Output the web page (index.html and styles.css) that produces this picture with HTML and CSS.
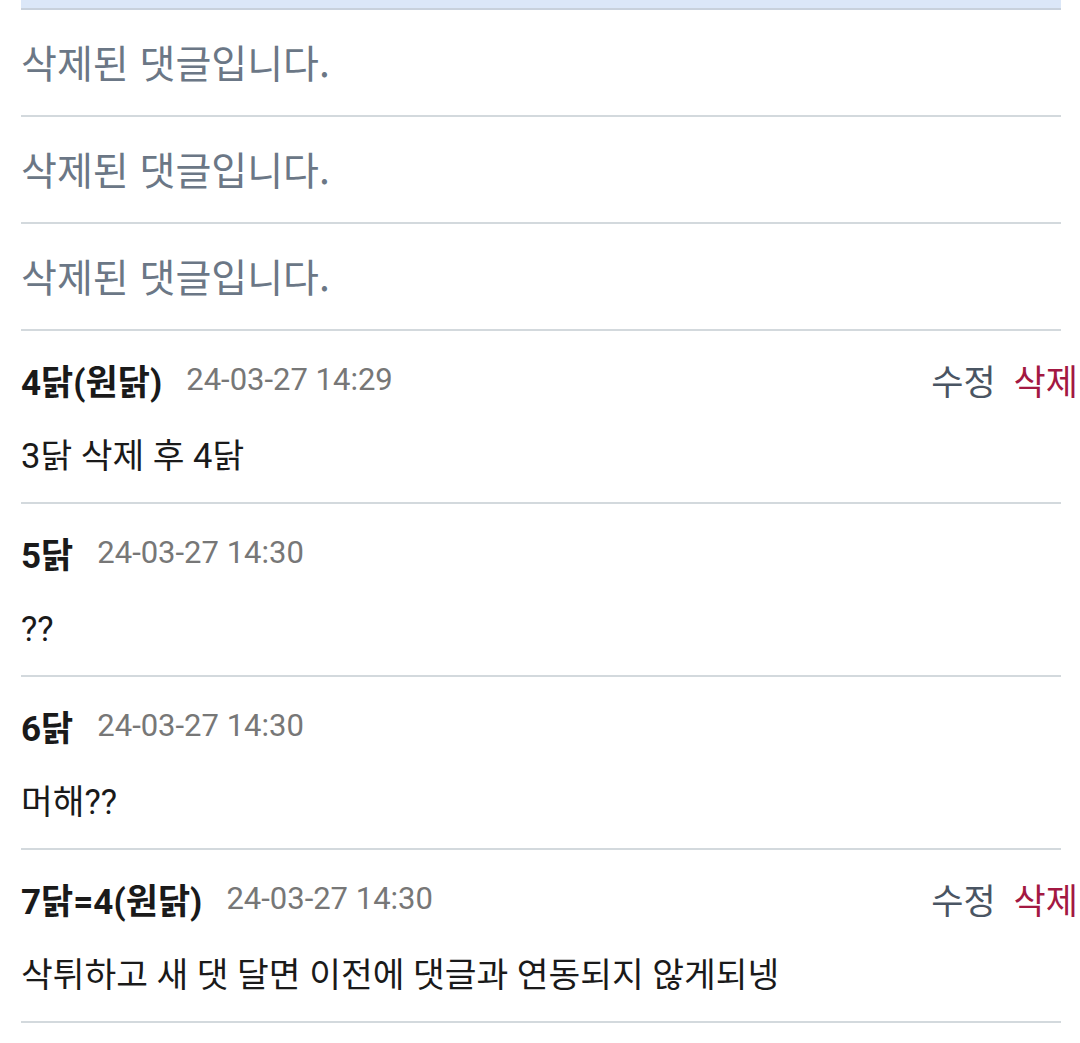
FILE: index.html
```html
<!DOCTYPE html>
<html lang="ko">
<head>
<meta charset="utf-8">
<link rel="stylesheet" href="styles.css">
</head>
<body>
<div class="list">
  <div class="topbar"></div>
  <div class="deleted">삭제된 댓글입니다.</div>
  <div class="deleted">삭제된 댓글입니다.</div>
  <div class="deleted">삭제된 댓글입니다.</div>
  <div class="comment">
    <div class="head">
      <span class="name">4닭(원닭)</span>
      <span class="date">24-03-27 14:29</span>
      <span class="actions"><span class="edit">수정</span><span class="del">삭제</span></span>
    </div>
    <div class="body">3닭 삭제 후 4닭</div>
  </div>
  <div class="comment">
    <div class="head">
      <span class="name">5닭</span>
      <span class="date">24-03-27 14:30</span>
    </div>
    <div class="body">??</div>
  </div>
  <div class="comment">
    <div class="head">
      <span class="name">6닭</span>
      <span class="date">24-03-27 14:30</span>
    </div>
    <div class="body">머해??</div>
  </div>
  <div class="comment">
    <div class="head">
      <span class="name">7닭=4(원닭)</span>
      <span class="date">24-03-27 14:30</span>
      <span class="actions"><span class="edit">수정</span><span class="del">삭제</span></span>
    </div>
    <div class="body">삭튀하고 새 댓 달면 이전에 댓글과 연동되지 않게되넹</div>
  </div>
</div>
</body>
</html>
```
FILE: styles.css
```css
html, body {
  margin: 0;
  padding: 0;
  background: #ffffff;
}
body {
  font-family: Roboto, "Noto Sans CJK KR", sans-serif;
  overflow: hidden;
}
.list {
  width: 1040px;
  margin-left: 21px;
}
.topbar {
  height: 8px;
  background: #dbe7f8;
  border-bottom: 2px solid #c8d1dc;
}
.deleted {
  font-family: "Noto Sans CJK KR", sans-serif;
  font-size: 39px;
  color: #6b7786;
  height: 105px;
  line-height: 103px;
  border-bottom: 2px solid #d3d9dd;
}
.comment {
  height: 171px;
  border-bottom: 2px solid #d3d9dd;
}
.head {
  display: flex;
  align-items: center;
  height: 40px;
  padding-top: 28px;
}
.name {
  font-family: Roboto, "Noto Sans CJK KR", sans-serif;
  font-weight: 700;
  font-size: 35px;
  color: #1a1a1a;
}
.date {
  font-family: Roboto, sans-serif;
  font-size: 31px;
  color: #777777;
  margin-left: 24px;
}
.actions {
  margin-left: auto;
  margin-right: -17px;
  display: flex;
  gap: 18px;
  font-family: "Noto Sans CJK KR", sans-serif;
  font-size: 35px;
}
.edit { color: #4a5563; }
.del { color: #a31842; }
.body {
  font-family: Roboto, "Noto Sans CJK KR", sans-serif;
  font-size: 34.5px;
  color: #1a1a1a;
  height: 40px;
  line-height: 40px;
  margin-top: 37px;
}
```
